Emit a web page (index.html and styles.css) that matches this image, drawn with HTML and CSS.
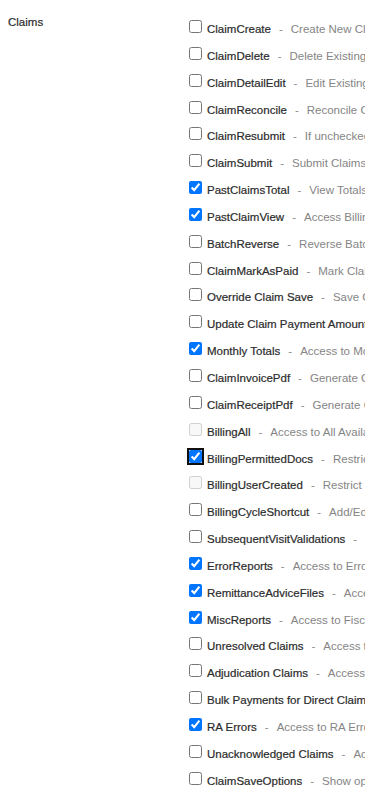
FILE: index.html
```html
<!DOCTYPE html>
<html>
<head>
<meta charset="utf-8">
<link rel="stylesheet" href="styles.css">
</head>
<body>
<div class="perm-group">
  <div class="group-label">Claims</div>
  <div class="perm-list">
    <label class="perm"><input type="checkbox"><span class="name">ClaimCreate</span><span class="sep">-</span><span class="desc">Create New Claims</span></label>
    <label class="perm"><input type="checkbox"><span class="name">ClaimDelete</span><span class="sep">-</span><span class="desc">Delete Existing Claims</span></label>
    <label class="perm"><input type="checkbox"><span class="name">ClaimDetailEdit</span><span class="sep">-</span><span class="desc">Edit Existing Claim Details</span></label>
    <label class="perm"><input type="checkbox"><span class="name">ClaimReconcile</span><span class="sep">-</span><span class="desc">Reconcile Claims</span></label>
    <label class="perm"><input type="checkbox"><span class="name">ClaimResubmit</span><span class="sep">-</span><span class="desc">If unchecked, claims cannot be resubmitted</span></label>
    <label class="perm"><input type="checkbox"><span class="name">ClaimSubmit</span><span class="sep">-</span><span class="desc">Submit Claims</span></label>
    <label class="perm"><input type="checkbox" checked><span class="name">PastClaimsTotal</span><span class="sep">-</span><span class="desc">View Totals of Past Claims</span></label>
    <label class="perm"><input type="checkbox" checked><span class="name">PastClaimView</span><span class="sep">-</span><span class="desc">Access Billing History</span></label>
    <label class="perm"><input type="checkbox"><span class="name">BatchReverse</span><span class="sep">-</span><span class="desc">Reverse Batch</span></label>
    <label class="perm"><input type="checkbox"><span class="name">ClaimMarkAsPaid</span><span class="sep">-</span><span class="desc">Mark Claims as Paid</span></label>
    <label class="perm"><input type="checkbox"><span class="name">Override Claim Save</span><span class="sep">-</span><span class="desc">Save Claims with errors</span></label>
    <label class="perm"><input type="checkbox"><span class="name">Update Claim Payment Amount</span><span class="sep">-</span><span class="desc">Update Payment Amount</span></label>
    <label class="perm"><input type="checkbox" checked><span class="name">Monthly Totals</span><span class="sep">-</span><span class="desc">Access to Monthly Totals</span></label>
    <label class="perm"><input type="checkbox"><span class="name">ClaimInvoicePdf</span><span class="sep">-</span><span class="desc">Generate Claim Invoice PDF</span></label>
    <label class="perm"><input type="checkbox"><span class="name">ClaimReceiptPdf</span><span class="sep">-</span><span class="desc">Generate Claim Receipt PDF</span></label>
    <label class="perm"><input type="checkbox" disabled><span class="name">BillingAll</span><span class="sep">-</span><span class="desc">Access to All Available Billing</span></label>
    <label class="perm"><input type="checkbox" class="focused" checked><span class="name">BillingPermittedDocs</span><span class="sep">-</span><span class="desc">Restrict to Permitted Doctors</span></label>
    <label class="perm"><input type="checkbox" disabled><span class="name">BillingUserCreated</span><span class="sep">-</span><span class="desc">Restrict to User Created</span></label>
    <label class="perm"><input type="checkbox"><span class="name">BillingCycleShortcut</span><span class="sep">-</span><span class="desc">Add/Edit Billing Cycle</span></label>
    <label class="perm"><input type="checkbox"><span class="name">SubsequentVisitValidations</span><span class="sep">-</span><span class="desc">Validate Subsequent Visits</span></label>
    <label class="perm"><input type="checkbox" checked><span class="name">ErrorReports</span><span class="sep">-</span><span class="desc">Access to Error Reports</span></label>
    <label class="perm"><input type="checkbox" checked><span class="name">RemittanceAdviceFiles</span><span class="sep">-</span><span class="desc">Access to Remittance Advice</span></label>
    <label class="perm"><input type="checkbox" checked><span class="name">MiscReports</span><span class="sep">-</span><span class="desc">Access to Fiscal Reports</span></label>
    <label class="perm"><input type="checkbox"><span class="name">Unresolved Claims</span><span class="sep">-</span><span class="desc">Access to Unresolved Claims</span></label>
    <label class="perm"><input type="checkbox"><span class="name">Adjudication Claims</span><span class="sep">-</span><span class="desc">Access to Adjudication</span></label>
    <label class="perm"><input type="checkbox"><span class="name">Bulk Payments for Direct Claims</span><span class="sep">-</span><span class="desc">Access to Bulk Payments</span></label>
    <label class="perm"><input type="checkbox" checked><span class="name">RA Errors</span><span class="sep">-</span><span class="desc">Access to RA Errors</span></label>
    <label class="perm"><input type="checkbox"><span class="name">Unacknowledged Claims</span><span class="sep">-</span><span class="desc">Access to Unacknowledged Claims</span></label>
    <label class="perm"><input type="checkbox"><span class="name">ClaimSaveOptions</span><span class="sep">-</span><span class="desc">Show options on Claim Save</span></label>
  </div>
</div>
</body>
</html>
```
FILE: styles.css
```css
html, body {
  margin: 0;
  padding: 0;
  background: #ffffff;
  overflow: hidden;
}
body {
  padding: 16px 0 0 8px;
  font-family: "Liberation Sans", Arial, sans-serif;
  font-size: 11.5px;
  color: #333333;
}
.perm-group {
  display: grid;
  grid-template-columns: 177px 1fr;
  min-width: 0;
}
.group-label {
  line-height: 13px;
  color: #2b2b2b;
  -webkit-text-stroke: 0.2px #2b2b2b;
}
.perm-list {
  display: flex;
  flex-direction: column;
  min-width: 0;
  overflow: hidden;
}
.perm {
  display: block;
  height: 26.85px;
  line-height: 26.85px;
  white-space: nowrap;
}
.perm input {
  width: 13px;
  height: 13px;
  margin: 0 5px 2px 4px;
  vertical-align: baseline;
}
.perm input.focused {
  outline: 2px solid #101010;
  outline-offset: 0;
  border-radius: 3px;
}
.name {
  color: #2b2b2b;
  -webkit-text-stroke: 0.2px #2b2b2b;
}
.sep {
  color: #8a8a8a;
  padding: 0 8px 0 8px;
}
.desc {
  color: #858585;
}
```
